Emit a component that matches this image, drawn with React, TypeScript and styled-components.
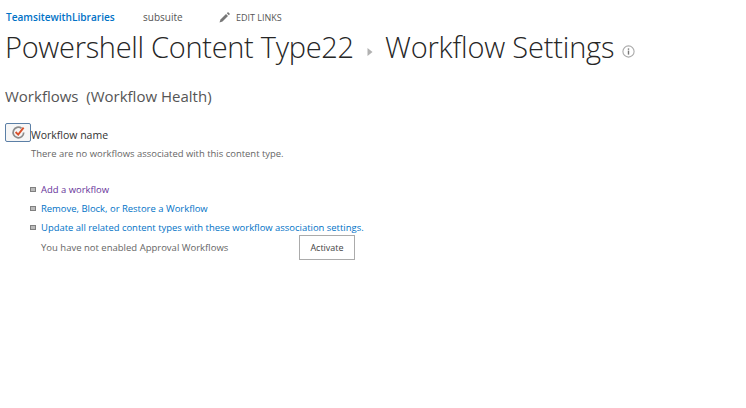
import styled, { createGlobalStyle } from 'styled-components';

const GlobalStyle = createGlobalStyle`
    html, body {
        margin: 0;
        padding: 0;
        background: #fff;
        font-family: 'Open Sans', 'Noto Sans', sans-serif;
    }
`;

const Page = styled.div`
    width: 746px;
    height: 408px;
    overflow: hidden;
    padding: 9px 0 0 5px;
    box-sizing: border-box;
`;

const TopNav = styled.nav`
    display: flex;
    align-items: center;
    height: 16px;
    font-size: 10.1px;
    white-space: nowrap;
`;

const SiteLink = styled.a`
    color: #0072c6;
    font-weight: 600;
    margin-left: 1px;
    width: 137px;
`;

const SubLink = styled.a`
    color: #555;
    width: 36px;
    font-size: 10px;
`;

const EditLinks = styled.a`
    display: flex;
    align-items: center;
    gap: 6px;
    margin-left: 40px;
    color: #555;
    font-size: 9px;
    text-transform: uppercase;
`;

const TitleRow = styled.h1`
    display: flex;
    align-items: center;
    margin: 0;
    height: 42px;
    font-size: 29px;
    font-weight: 300;
    color: #262626;
    white-space: nowrap;
`;

const Crumb = styled.span`
    display: block;
    width: 348px;
    letter-spacing: -0.3px;
`;

const Arrow = styled.svg`
    width: 6px;
    height: 8px;
    margin: 12px 0 0 14px;
`;

const CurrentCrumb = styled.span`
    margin-left: 12px;
    letter-spacing: -0.18px;
`;

const InfoIcon = styled.svg`
    width: 13px;
    height: 13px;
    margin: 11px 0 0 8px;
`;

const SectionHeading = styled.h2`
    margin: 18px 0 0;
    height: 22px;
    font-size: 15px;
    line-height: 22px;
    font-weight: 400;
    color: #555;
    white-space: pre;
`;

const NameRow = styled.div`
    display: flex;
    align-items: flex-end;
    margin-top: 16px;
    height: 19px;
`;

const IconButton = styled.button`
    display: flex;
    align-items: center;
    justify-content: center;
    width: 26px;
    height: 19px;
    padding: 0;
    background: #f6f6f6;
    border: 1px solid #5b7fa6;
    border-radius: 2px;
    box-sizing: border-box;
`;

const NameLabel = styled.span`
    font-size: 10.5px;
    line-height: 13px;
    color: #333;
`;

const EmptyNote = styled.p`
    margin: 4px 0 0 26px;
    font-size: 9.45px;
    line-height: 16px;
    color: #666;
`;

const ActionList = styled.ul`
    list-style: none;
    margin: 18px 0 0 25px;
    padding: 0;
`;

const ActionItem = styled.li`
    display: flex;
    align-items: center;
    height: 19px;
    font-size: 9.45px;
    white-space: nowrap;
`;

const Bullet = styled.span`
    width: 6px;
    height: 5px;
    margin-right: 5px;
    background: #bbb;
    border: 1px solid #808080;
    box-sizing: border-box;
`;

const ActionLink = styled.a<{ $visited?: boolean }>`
    color: ${(p) => (p.$visited ? '#663399' : '#0072c6')};
`;

const ApprovalRow = styled.div`
    display: flex;
    align-items: center;
    margin: -2px 0 0 36px;
    height: 25px;
    font-size: 9.5px;
    color: #666;
`;

const ApprovalText = styled.span`
    width: 258px;
`;

const ActivateButton = styled.button`
    width: 56px;
    height: 25px;
    padding: 0;
    background: #fff;
    border: 1px solid #ababab;
    font-family: inherit;
    font-size: 9px;
    color: #444;
`;

export default function App() {
    return (
        <Page>
            <GlobalStyle />
            <TopNav>
                <SiteLink>TeamsitewithLibraries</SiteLink>
                <SubLink>subsuite</SubLink>
                <EditLinks>
                    <svg width="11" height="11" viewBox="0 0 11 11">
                        <path d="M0.5 10.5 L1.5 7.5 L7 2 L9 4 L3.5 9.5 Z" fill="#777" />
                        <path d="M7.8 1.2 L9 0 L11 2 L9.8 3.2 Z" fill="#777" />
                    </svg>
                    Edit Links
                </EditLinks>
            </TopNav>
            <TitleRow>
                <Crumb>Powershell Content Type22</Crumb>
                <Arrow viewBox="0 0 6 8">
                    <path d="M0.5 0 L5.5 4 L0.5 8 Z" fill="#b1b1b1" />
                </Arrow>
                <CurrentCrumb>Workflow Settings</CurrentCrumb>
                <InfoIcon viewBox="0 0 13 13">
                    <circle cx="6.5" cy="6.5" r="5.6" fill="none" stroke="#aaa" strokeWidth="1.1" />
                    <rect x="5.8" y="5.6" width="1.4" height="4" fill="#777" />
                    <rect x="5.8" y="3.4" width="1.4" height="1.4" fill="#777" />
                </InfoIcon>
            </TitleRow>
            <SectionHeading>Workflows  (Workflow Health)</SectionHeading>
            <NameRow>
                <IconButton aria-label="Workflow">
                    <svg width="15" height="15" viewBox="0 0 15 15">
                        <path d="M10.5 3.2 A5.3 5.3 0 1 0 12.7 7.5" fill="none" stroke="#8c8c8c" strokeWidth="1.7" />
                        <path d="M4.6 7 L7.2 9.6 L12.6 2.6" fill="none" stroke="#d9502a" strokeWidth="1.9" />
                    </svg>
                </IconButton>
                <NameLabel>Workflow name</NameLabel>
            </NameRow>
            <EmptyNote>There are no workflows associated with this content type.</EmptyNote>
            <ActionList>
                <ActionItem>
                    <Bullet />
                    <ActionLink $visited>Add a workflow</ActionLink>
                </ActionItem>
                <ActionItem>
                    <Bullet />
                    <ActionLink>Remove, Block, or Restore a Workflow</ActionLink>
                </ActionItem>
                <ActionItem>
                    <Bullet />
                    <ActionLink>Update all related content types with these workflow association settings.</ActionLink>
                </ActionItem>
            </ActionList>
            <ApprovalRow>
                <ApprovalText>You have not enabled Approval Workflows</ApprovalText>
                <ActivateButton>Activate</ActivateButton>
            </ApprovalRow>
        </Page>
    );
}
